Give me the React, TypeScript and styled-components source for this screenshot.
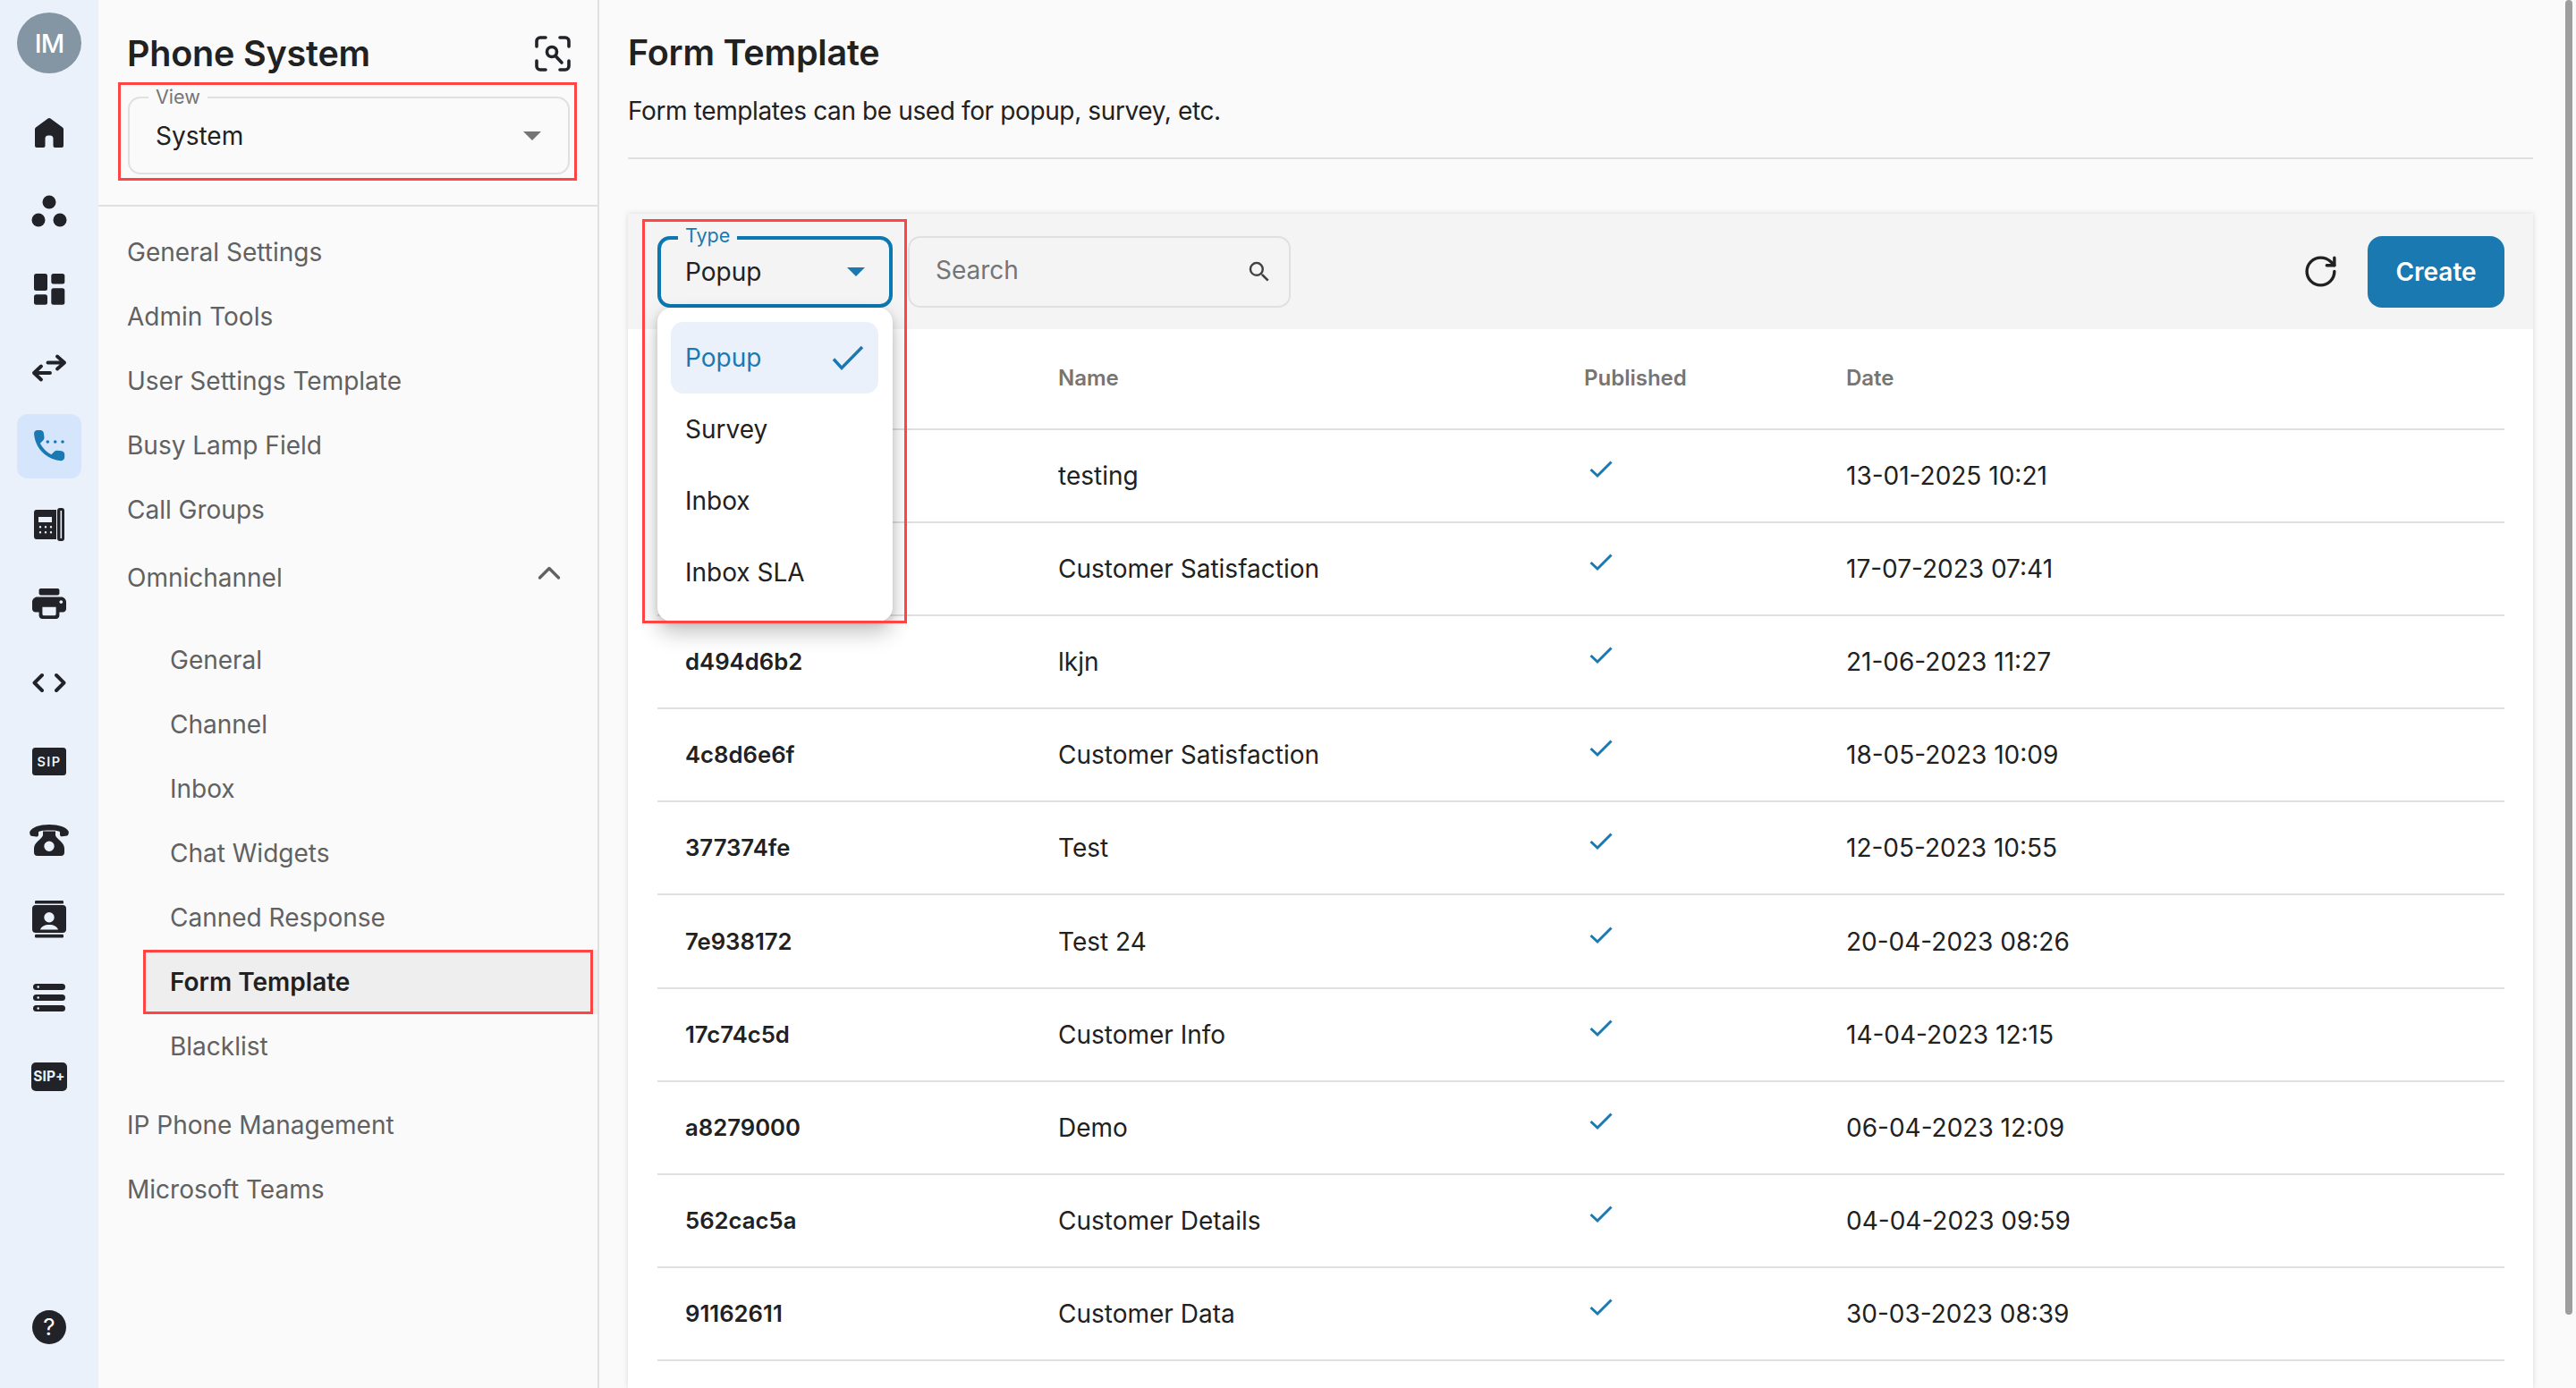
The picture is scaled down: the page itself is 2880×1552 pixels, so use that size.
import React from 'react';
import styled, { createGlobalStyle } from 'styled-components';
import { RotateCw } from 'lucide-react';
import { MdSearch } from 'react-icons/md';

const ink = '#212329';
const rail = '#EAF1FA';
const blue = '#1B79B2';

const GlobalStyle = createGlobalStyle`
  html, body { margin: 0; height: 100%; overflow: hidden; background: #FAFAFA; }
  body { font-family: Inter, "Liberation Sans", sans-serif; color: #212121; }
  #root { height: 100%; }
  *, *::before, *::after { box-sizing: border-box; }
`;

const Shell = styled.div`
  position: relative;
  display: flex;
  height: 100%;
  background: #FAFAFA;
`;

const Rail = styled.nav`
  flex: none;
  width: 110px;
  display: flex;
  flex-direction: column;
  align-items: center;
  gap: 16px;
  padding: 14px 0 33px;
  background: ${rail};
`;

const Avatar = styled.div`
  width: 72px;
  height: 68px;
  margin-bottom: 13px;
  border-radius: 50%;
  background: #8496A4;
  color: #fff;
  display: flex;
  align-items: center;
  justify-content: center;
  font-size: 29px;
  font-weight: 500;
  letter-spacing: -1px;
`;

const RailButton = styled.div<{ $active?: boolean; $bottom?: boolean }>`
  flex: none;
  width: 72px;
  height: 72px;
  display: flex;
  align-items: center;
  justify-content: center;
  border-radius: 12px;
  background: ${p => (p.$active ? '#D5E5FB' : 'transparent')};
  margin-top: ${p => (p.$bottom ? 'auto' : '0')};
  svg { display: block; width: 48px; height: 48px; fill: ${ink}; }
`;

const Stroke = styled.g`
  fill: none;
  stroke: ${ink};
  stroke-width: 3.9;
  stroke-linecap: round;
  stroke-linejoin: round;
`;

const ActiveGlyph = styled.g`
  fill: ${blue};
`;

const IconLabel = styled.text`
  fill: #EAF1FA;
  font-family: Inter, "Liberation Sans", sans-serif;
  font-weight: 700;
  text-anchor: middle;
`;

const HelpMark = styled.text`
  fill: #fff;
  font-family: Inter, "Liberation Sans", sans-serif;
  font-size: 26px;
  font-weight: 400;
  text-anchor: middle;
`;

const Panel = styled.aside`
  flex: none;
  width: 560px;
  border-right: 2px solid #E0E0E0;
  display: flex;
  flex-direction: column;
`;

const PanelHead = styled.header`
  height: 231px;
  flex: none;
  border-bottom: 2px solid #E0E0E0;
  padding: 40px 30px 0 32px;
`;

const PanelTitleRow = styled.div`
  display: flex;
  align-items: center;
  justify-content: space-between;
  height: 40px;
`;

const PanelTitle = styled.h2`
  margin: 0;
  font-size: 39.5px;
  font-weight: 600;
  line-height: 40px;
  color: #212121;
  letter-spacing: -0.2px;
`;

const ScanIcon = styled.svg`
  width: 40px;
  height: 40px;
  fill: none;
  stroke: ${ink};
  stroke-width: 3.6;
  stroke-linecap: round;
`;

const ViewMark = styled.div`
  width: 513px;
  height: 110px;
  margin: 12px 0 0 -10px;
  padding: 13px 5px 0 8px;
  border: 3.5px solid #FF4444;
`;

const Field = styled.div<{ $focus?: boolean; $h: number }>`
  position: relative;
  display: flex;
  align-items: center;
  justify-content: space-between;
  height: ${p => p.$h}px;
  border-radius: 14px;
  border: ${p => (p.$focus ? `4px solid #0C78B2` : '2px solid #E0E0E0')};
  padding-left: ${p => (p.$focus ? 27 : 29)}px;
  padding-right: ${p => (p.$focus ? 27 : 30)}px;
`;

const FieldLabel = styled.span<{ $focus?: boolean }>`
  position: absolute;
  top: ${p => (p.$focus ? -17 : -14)}px;
  left: ${p => (p.$focus ? 19 : 21)}px;
  padding: 0 8px;
  font-size: 21.5px;
  line-height: 24px;
  color: ${p => (p.$focus ? blue : '#757575')};
  background: ${p => (p.$focus ? '#F4F4F4' : '#FAFAFA')};
`;

const FieldValue = styled.span`
  font-size: 28px;
  line-height: 36px;
  color: #212121;
`;

const Caret = styled.span<{ $color: string }>`
  width: 0;
  height: 0;
  border-left: 10px solid transparent;
  border-right: 10px solid transparent;
  border-top: 10px solid ${p => p.$color};
`;

const NavList = styled.ul`
  list-style: none;
  margin: 0;
  padding: 15px 0 0;
`;

const NavItem = styled.li<{ $sub?: boolean; $current?: boolean; $gapTop?: number }>`
  position: relative;
  display: flex;
  align-items: center;
  justify-content: space-between;
  height: 72px;
  margin-top: ${p => p.$gapTop ?? 0}px;
  margin-left: ${p => (p.$sub ? 50 : 0)}px;
  padding-left: ${p => (p.$sub ? 30 : 32)}px;
  padding-right: 41px;
  font-size: 28px;
  font-weight: ${p => (p.$current ? 600 : 400)};
  color: ${p => (p.$current ? '#212121' : '#616161')};
  background: ${p => (p.$current ? '#EEEEEE' : 'transparent')};
  ${p =>
    p.$current
      ? `&::after { content: ''; position: absolute; inset: 0 5px 0 0; border: 3.5px solid #FF4444; pointer-events: none; }`
      : ''}
`;

const SubGap = styled.li<{ $h: number }>`
  height: ${p => p.$h}px;
`;

const Chevron = styled.svg`
  width: 26px;
  height: 18px;
  margin-top: -10px;
  fill: none;
  stroke: #616161;
  stroke-width: 3.4;
  stroke-linecap: round;
  stroke-linejoin: round;
`;

const Main = styled.main`
  position: relative;
  flex: 1;
  min-width: 0;
  display: flex;
  flex-direction: column;
  padding: 35px 48px 0 32px;
`;

const Title = styled.h1`
  margin: 0;
  font-size: 39.5px;
  line-height: 48px;
  font-weight: 600;
  color: #212121;
  letter-spacing: -0.2px;
`;

const Subtitle = styled.p`
  margin: 21px 0 0;
  font-size: 28px;
  line-height: 40px;
  letter-spacing: -0.38px;
  color: #212121;
`;

const Rule = styled.hr`
  flex: none;
  width: 100%;
  height: 2px;
  margin: 32px 0 0;
  border: 0;
  background: #E0E0E0;
`;

const Card = styled.section`
  flex: 1;
  min-height: 0;
  margin-top: 61px;
  background: #fff;
  box-shadow: 0 0 6px rgba(0, 0, 0, 0.14);
`;

const Toolbar = styled.div`
  height: 129px;
  display: flex;
  align-items: center;
  padding: 0 32px 0 33px;
  background: #F4F4F4;
`;

const TypeControl = styled.div`
  position: relative;
  flex: none;
  width: 263px;
  z-index: 2;
  &::after {
    content: '';
    position: absolute;
    top: -19px;
    left: -17px;
    right: -16px;
    height: 452px;
    border: 3.5px solid #FF4444;
    pointer-events: none;
    z-index: 3;
  }
`;

const Menu = styled.div`
  position: absolute;
  top: 80px;
  left: 0;
  width: 263px;
  height: 351px;
  padding: 16px 16px 16px 15px;
  border-radius: 16px;
  background: #fff;
  box-shadow: 0 12px 24px rgba(0, 0, 0, 0.24), 0 2px 8px rgba(0, 0, 0, 0.12);
`;

const MenuItem = styled.div<{ $selected?: boolean }>`
  display: flex;
  align-items: center;
  justify-content: space-between;
  height: 80px;
  padding: 0 16px;
  border-radius: 14px;
  font-size: 28px;
  color: ${p => (p.$selected ? blue : '#212121')};
  background: ${p => (p.$selected ? '#EAF1FB' : 'transparent')};
`;

const MenuCheck = styled.svg`
  width: 36px;
  height: 28px;
  fill: none;
  stroke: ${blue};
  stroke-width: 3.4;
`;

const SearchBox = styled.div`
  flex: none;
  width: 428px;
  height: 80px;
  margin-left: 17px;
  display: flex;
  align-items: center;
  justify-content: space-between;
  padding: 0 18px 0 29px;
  border: 2px solid #E0E0E0;
  border-radius: 14px;
  color: #424242;
`;

const SearchHint = styled.span`
  font-size: 28px;
  color: #757575;
  margin-top: -4px;
`;

const RefreshSlot = styled.div`
  margin-left: auto;
  margin-right: 32px;
  display: flex;
  color: #212121;
`;

const CreateButton = styled.button`
  width: 153px;
  height: 80px;
  border: 0;
  border-radius: 16px;
  background: ${blue};
  color: #fff;
  font-family: inherit;
  font-size: 28px;
  font-weight: 600;
`;

const TableArea = styled.div`
  padding: 0 32px 0 33px;
`;

const Row = styled.div<{ $head?: boolean }>`
  display: grid;
  grid-template-columns: 417px 588px 293px 1fr;
  align-items: center;
  height: ${p => (p.$head ? '113px' : '104.1px')};
  padding: ${p => (p.$head ? '0 0 2px 31px' : '0 0 0 31px')};
  border-bottom: 2px solid #E0E0E0;
  font-size: ${p => (p.$head ? '24px' : '28px')};
  font-weight: ${p => (p.$head ? 600 : 400)};
  color: ${p => (p.$head ? '#757575' : '#212121')};
`;

const IdCell = styled.span`
  font-size: 25.7px;
  font-weight: 600;
  margin-top: -1px;
`;

const PublishedMark = styled.svg`
  display: block;
  width: 26px;
  height: 20px;
  margin: -14px 0 0 6px;
  fill: none;
  stroke: ${blue};
  stroke-width: 3;
`;

const ScrollThumb = styled.div`
  position: absolute;
  top: 0;
  right: 4px;
  width: 8px;
  height: 1470px;
  border-radius: 4px;
  background: #9E9E9E;
`;

const rows = [
  ['', 'testing', '13-01-2025 10:21'],
  ['', 'Customer Satisfaction', '17-07-2023 07:41'],
  ['d494d6b2', 'lkjn', '21-06-2023 11:27'],
  ['4c8d6e6f', 'Customer Satisfaction', '18-05-2023 10:09'],
  ['377374fe', 'Test', '12-05-2023 10:55'],
  ['7e938172', 'Test 24', '20-04-2023 08:26'],
  ['17c74c5d', 'Customer Info', '14-04-2023 12:15'],
  ['a8279000', 'Demo', '06-04-2023 12:09'],
  ['562cac5a', 'Customer Details', '04-04-2023 09:59'],
  ['91162611', 'Customer Data', '30-03-2023 08:39'],
];

const railIcons: { key: string; active?: boolean; art: React.ReactNode }[] = [
  {
    key: 'home',
    art: (
      <path d="M22.6 9.6a2.2 2.2 0 0 1 2.8 0L39 19.6a2.5 2.5 0 0 1 1 2V40a2 2 0 0 1-2 2h-7.5a2 2 0 0 1-2-2v-8a3.5 3.5 0 0 0-3.5-3.5h-2a3.5 3.5 0 0 0-3.5 3.5v8a2 2 0 0 1-2 2H10a2 2 0 0 1-2-2V21.6a2.5 2.5 0 0 1 1-2Z" />
    ),
  },
  {
    key: 'group',
    art: (
      <>
        <circle cx="24" cy="15" r="7.5" />
        <circle cx="12" cy="35" r="7.5" />
        <circle cx="36" cy="35" r="7.5" />
      </>
    ),
  },
  {
    key: 'dashboard',
    art: (
      <>
        <rect x="7" y="7" width="15" height="19" rx="2.5" />
        <rect x="26.3" y="7" width="15" height="11.5" rx="2.5" />
        <rect x="7" y="30.3" width="15" height="11.5" rx="2.5" />
        <rect x="26.3" y="23.3" width="15" height="18.5" rx="2.5" />
      </>
    ),
  },
  {
    key: 'swap',
    art: (
      <Stroke>
        <path d="M22.5 18.5H41M33 11.5l8 7-8 7" />
        <path d="M25 30H7M15 22.5 7 30l8 7.5" />
      </Stroke>
    ),
  },
  {
    key: 'phone',
    active: true,
    art: (
      <ActiveGlyph style={{ fill: blue }}>
        <path
          transform="translate(1.3 .3) scale(1.9)"
          d="M19.23 15.26l-2.54-.29c-.61-.07-1.21.14-1.64.57l-1.84 1.84c-2.83-1.44-5.15-3.75-6.59-6.59l1.85-1.85c.43-.43.64-1.03.57-1.64l-.29-2.52c-.12-1.01-.97-1.77-1.99-1.77H5.03c-1.13 0-2.07.94-2 2.07.53 8.54 7.36 15.36 15.89 15.89 1.13.07 2.07-.87 2.07-2v-1.73c.01-1.01-.75-1.86-1.76-1.98z"
        />
        <circle cx="22.3" cy="19" r="1.8" />
        <circle cx="30.7" cy="19" r="1.8" />
        <circle cx="39" cy="19" r="1.8" />
      </ActiveGlyph>
    ),
  },
  {
    key: 'fax',
    art: (
      <>
        <path
          fillRule="evenodd"
          d="M10 7h22v33H10a3 3 0 0 1-3-3V10a3 3 0 0 1 3-3Zm2 8v6h15v-6H12Zm2 10a1.2 1.2 0 1 0 0 2.4 1.2 1.2 0 0 0 0-2.4Zm6 0a1.2 1.2 0 1 0 0 2.4 1.2 1.2 0 0 0 0-2.4Zm6 0a1.2 1.2 0 1 0 0 2.4 1.2 1.2 0 0 0 0-2.4Zm-12 6a1.2 1.2 0 1 0 0 2.4 1.2 1.2 0 0 0 0-2.4Zm6 0a1.2 1.2 0 1 0 0 2.4 1.2 1.2 0 0 0 0-2.4Zm6 0a1.2 1.2 0 1 0 0 2.4 1.2 1.2 0 0 0 0-2.4Z"
        />
        <path
          fillRule="evenodd"
          d="M36 5h2a3 3 0 0 1 3 3v31a3 3 0 0 1-3 3h-2a3 3 0 0 1-3-3V8a3 3 0 0 1 3-3Zm.5 3v31h1.6V8h-1.6Z"
        />
      </>
    ),
  },
  {
    key: 'print',
    art: (
      <path
        transform="translate(1.2 1.2) scale(1.9)"
        d="M19 8H5c-1.66 0-3 1.34-3 3v4c0 1.1.9 2 2 2h2v2c0 1.1.9 2 2 2h8c1.1 0 2-.9 2-2v-2h2c1.1 0 2-.9 2-2v-4c0-1.66-1.34-3-3-3zm-4 11H9c-.55 0-1-.45-1-1v-4h8v4c0 .55-.45 1-1 1zm4-7c-.55 0-1-.45-1-1s.45-1 1-1 1 .45 1 1-.45 1-1 1zm-2-9H7c-.55 0-1 .45-1 1v2c0 .55.45 1 1 1h10c.55 0 1-.45 1-1V4c0-.55-.45-1-1-1z"
      />
    ),
  },
  {
    key: 'code',
    art: (
      <Stroke>
        <path d="M16 16 7.5 24.5 16 33" />
        <path d="M32 16l8.5 8.5L32 33" />
      </Stroke>
    ),
  },
  {
    key: 'sip',
    art: (
      <>
        <rect x="5" y="9" width="38" height="31" rx="3.5" />
        <IconLabel x="24" y="29.5" fontSize="14.5" letterSpacing="1.4" style={{ fontWeight: 600 }}>
          SIP
        </IconLabel>
      </>
    ),
  },
  {
    key: 'telephone',
    art: (
      <>
        <path d="M24 7C13 7 5 10 2.500 14.500c-.8 1.500 0 5 1.500 5.200l5.500.8c1.500.2 2.500-.8 2.500-2.300v-2.700c0-1 3-2 12-2s12 1 12 2V18c0 1.500 1 2.500 2.500 2.300l5.500-.8c1.500-.2 2.300-3.700 1.500-5.200C43 10 35 7 24 7Z" />
        <path
          fillRule="evenodd"
          d="M17 14.500h14v4c0 1.500 1.500 3 3 4.500 3 3 7 6 7 11v4a4 4 0 0 1-4 4H11a4 4 0 0 1-4-4v-4c0-5 4-8 7-11 1.500-1.500 3-3 3-4.500Zm7 11a5.700 5.700 0 1 0 0 11.400 5.700 5.700 0 0 0 0-11.400Z"
        />
      </>
    ),
  },
  {
    key: 'contacts',
    art: (
      <>
        <rect x="8" y="4" width="32" height="3.600" rx="1.200" />
        <rect x="8" y="41.800" width="32" height="3.600" rx="1.200" />
        <path
          fillRule="evenodd"
          d="M9 9h30a4 4 0 0 1 4 4v23a4 4 0 0 1-4 4H9a4 4 0 0 1-4-4V13a4 4 0 0 1 4-4Zm15 8a5.700 5.700 0 1 0 0 11.400A5.700 5.700 0 0 0 24 17Zm-10 19.500h20c-1-3.500-5-5.500-10-5.500s-9 2-10 5.500Z"
        />
      </>
    ),
  },
  {
    key: 'storage',
    art: (
      <path
        fillRule="evenodd"
        d="M9.500 9h29a3.500 3.500 0 1 1 0 7h-29a3.500 3.500 0 1 1 0-7Zm2.200 2.200a1.300 1.300 0 1 0 0 2.600 1.300 1.300 0 0 0 0-2.600ZM9.500 21h29a3.500 3.500 0 1 1 0 7h-29a3.500 3.500 0 1 1 0-7Zm2.200 2.200a1.300 1.300 0 1 0 0 2.600 1.300 1.300 0 0 0 0-2.600ZM9.500 33h29a3.500 3.500 0 1 1 0 7h-29a3.500 3.500 0 1 1 0-7Zm2.200 2.200a1.300 1.300 0 1 0 0 2.600 1.300 1.300 0 0 0 0-2.600Z"
      />
    ),
  },
  {
    key: 'sipplus',
    art: (
      <>
        <rect x="4" y="9" width="40" height="32" rx="5" />
        <IconLabel x="24" y="30" fontSize="15.500" letterSpacing="0.200">
          SIP+
        </IconLabel>
      </>
    ),
  },
];

const Check = () => (
  <PublishedMark viewBox="0 0 26 20">
    <path d="M1.500 10 9 17 24.500 1.500" />
  </PublishedMark>
);

export default function App() {
  return (
    <Shell>
      <GlobalStyle />
      <Rail>
        <Avatar>IM</Avatar>
        {railIcons.map(i => (
          <RailButton key={i.key} $active={i.active}>
            <svg viewBox="0 0 48 48">{i.art}</svg>
          </RailButton>
        ))}
        <RailButton $bottom>
          <svg viewBox="0 0 48 48">
            <circle cx="24" cy="25" r="19" />
            <HelpMark x="24" y="34">?</HelpMark>
          </svg>
        </RailButton>
      </Rail>

      <Panel>
        <PanelHead>
          <PanelTitleRow>
            <PanelTitle>Phone System</PanelTitle>
            <ScanIcon viewBox="0 0 40 40">
              <path d="M2 12V6a4 4 0 0 1 4-4h6M28 2h6a4 4 0 0 1 4 4v6M38 28v6a4 4 0 0 1-4 4h-6M12 38H6a4 4 0 0 1-4-4v-6" />
              <circle cx="19" cy="18" r="5.500" />
              <path d="M23 22.500l7 7.500" />
            </ScanIcon>
          </PanelTitleRow>
          <ViewMark>
            <Field $h={87}>
              <FieldLabel>View</FieldLabel>
              <FieldValue>System</FieldValue>
              <Caret $color="#757575" />
            </Field>
          </ViewMark>
        </PanelHead>
        <NavList>
          <NavItem>General Settings</NavItem>
          <NavItem>Admin Tools</NavItem>
          <NavItem>User Settings Template</NavItem>
          <NavItem>Busy Lamp Field</NavItem>
          <NavItem>Call Groups</NavItem>
          <NavItem $gapTop={3.7}>
            Omnichannel
            <Chevron viewBox="0 0 26 18">
              <path d="M2.500 14 13 3.500 23.500 14" />
            </Chevron>
          </NavItem>
          <SubGap $h={20} />
          <NavItem $sub>General</NavItem>
          <NavItem $sub>Channel</NavItem>
          <NavItem $sub>Inbox</NavItem>
          <NavItem $sub>Chat Widgets</NavItem>
          <NavItem $sub>Canned Response</NavItem>
          <NavItem $sub $current>Form Template</NavItem>
          <NavItem $sub>Blacklist</NavItem>
          <SubGap $h={16} />
          <NavItem>IP Phone Management</NavItem>
          <NavItem>Microsoft Teams</NavItem>
        </NavList>
      </Panel>

      <Main>
        <Title>Form Template</Title>
        <Subtitle>Form templates can be used for popup, survey, etc.</Subtitle>
        <Rule />
        <Card>
          <Toolbar>
            <TypeControl>
              <Field $focus $h={80}>
                <FieldLabel $focus>Type</FieldLabel>
                <FieldValue>Popup</FieldValue>
                <Caret $color={blue} />
              </Field>
              <Menu>
                <MenuItem $selected>
                  Popup
                  <MenuCheck viewBox="0 0 36 28">
                    <path d="M2 15.500 11 25.500 34 2" />
                  </MenuCheck>
                </MenuItem>
                <MenuItem>Survey</MenuItem>
                <MenuItem>Inbox</MenuItem>
                <MenuItem>Inbox SLA</MenuItem>
              </Menu>
            </TypeControl>
            <SearchBox>
              <SearchHint>Search</SearchHint>
              <MdSearch size={30} />
            </SearchBox>
            <RefreshSlot>
              <RotateCw size={41} strokeWidth={2} />
            </RefreshSlot>
            <CreateButton>Create</CreateButton>
          </Toolbar>
          <TableArea>
            <Row $head>
              <span />
              <span>Name</span>
              <span>Published</span>
              <span>Date</span>
            </Row>
            {rows.map((r, i) => (
              <Row key={i}>
                <IdCell>{r[0]}</IdCell>
                <span>{r[1]}</span>
                <span><Check /></span>
                <span>{r[2]}</span>
              </Row>
            ))}
          </TableArea>
        </Card>
        <ScrollThumb />
      </Main>
    </Shell>
  );
}
